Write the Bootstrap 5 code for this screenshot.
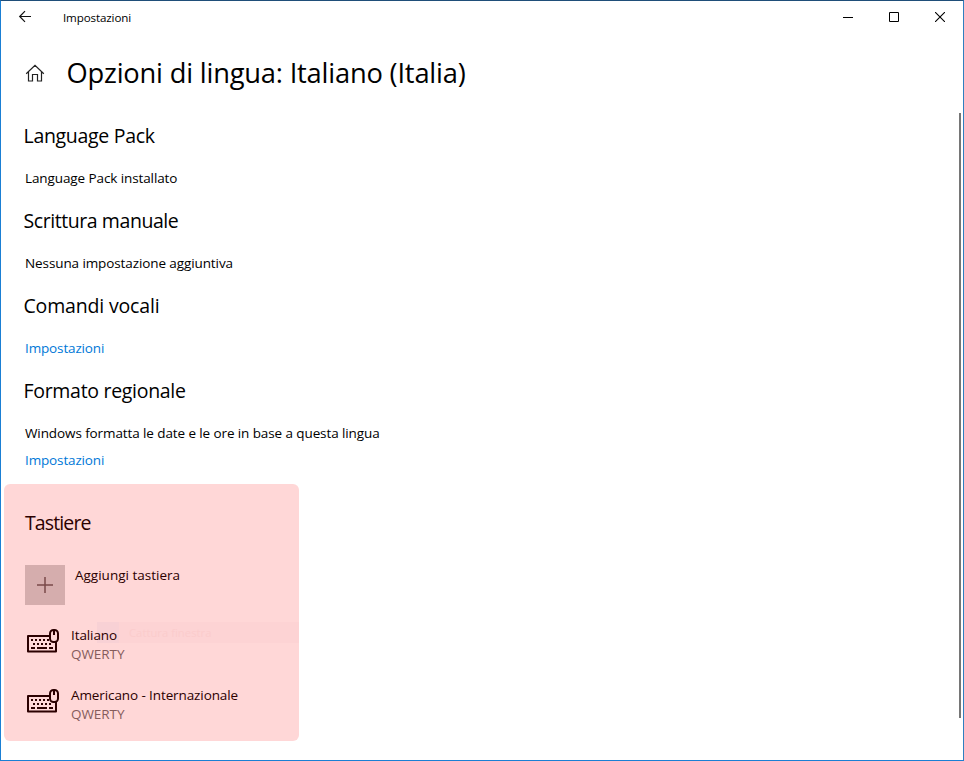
<!DOCTYPE html>
<html lang="it">
<head>
<meta charset="utf-8">
<meta name="viewport" content="width=device-width, initial-scale=1">
<title>Impostazioni</title>
<link rel="stylesheet" href="https://cdn.jsdelivr.net/npm/bootstrap@5.3.0/dist/css/bootstrap.min.css">
<style>
body { font-family: "Open Sans", "Segoe UI", sans-serif; font-size: 13.5px; line-height: 20px; color: #000; background: #fff; }
.window { height: 761px; border: 1px solid #1a7fd4; border-top-color: #1f4e79; border-right-color: #2f7fc0; }
.titlebar { height: 32px; padding-left: 17px; }
.titlebar svg, .page-head svg, .keyboard svg { display: block; flex: none; }
.app-name { font-size: 11.6px; margin-left: 31px; letter-spacing: -.12px; padding-top: 1px; }
.caption-btn { width: 46px; height: 32px; border: 0; background: none; padding: 0; }
.page-head { height: 40px; margin-top: 20px; padding-left: 24px; }
.page-title { font-size: 27.3px; line-height: 40px; font-weight: 400; margin: 0 0 0 21.5px; letter-spacing: -.2px; }
.scroll-area { height: 648px; margin-top: 19px; padding: 0 2px 0 3px; }
.settings { padding: 10px 0 0 20px; }
.section-title { font-size: 19.5px; line-height: 28px; font-weight: 400; margin: 0 0 18px -.5px; letter-spacing: -.3px; }
.title-tight { letter-spacing: -.43px; }
.title-loose { letter-spacing: -.17px; }
.entry { margin: 0 0 19px 1px; letter-spacing: -.1px; }
.entry a { color: #0078d7; text-decoration: none; letter-spacing: -.14px; }
.entry + .entry { margin-top: -12px; margin-bottom: 14px; }
.keyboards { width: 295px; height: 257px; border-radius: 6px; background: #ffd7d7; color: #2b0000; padding: 25px 0 0 21px; }
.keyboards .section-title { margin: 0 0 28px; letter-spacing: -.88px; }
.add-btn { width: 40px; height: 40px; border: 0; padding: 0; background: #d5adad; }
.add-label { margin-left: 10px; }
.keyboard { height: 40px; margin-top: 20px; line-height: 19px; letter-spacing: -.1px; }
.keyboard-text { margin-left: 12px; padding-top: 1px; }
.layout { color: #855c5c; letter-spacing: -.05px; }
.thumb { width: 2px; height: 605px; margin-top: 1px; background: #767676; }
.ghost { left: 93px; top: 138px; width: 202px; height: 21px; background: #fdd3d4; color: #fbcccc; font-size: 11.3px; line-height: 21px; }
.ghost-icon { width: 22px; height: 21px; background: #f8d1d5; margin-right: 10px; }
</style>
</head>
<body>
<div class="window d-flex flex-column">
  <header class="titlebar d-flex align-items-center">
    <svg width="14" height="14" viewBox="0 0 14 14" fill="none" stroke="#111" stroke-width="1.2"><path d="M13 6.500H2M7 1.200 1.700 6.500 7 11.800"/></svg>
    <span class="app-name">Impostazioni</span>
    <div class="d-flex ms-auto">
      <button class="caption-btn" aria-label="Riduci a icona"><svg width="10" height="10" viewBox="0 0 10 10" class="mx-auto"><path d="M0 5.500h10" stroke="#000"/></svg></button>
      <button class="caption-btn" aria-label="Ingrandisci"><svg width="10" height="10" viewBox="0 0 10 10" class="mx-auto"><path d="M.5.5h9v9h-9z" fill="none" stroke="#000"/></svg></button>
      <button class="caption-btn" aria-label="Chiudi"><svg width="10" height="10" viewBox="0 0 10 10" class="mx-auto"><path d="m0 0 10 10M10 0 0 10" stroke="#000" stroke-width="1.1"/></svg></button>
    </div>
  </header>

  <div class="page-head d-flex align-items-center">
    <svg width="20" height="20" viewBox="0 0 20 20" fill="none" stroke="#222" stroke-width="1.200"><path d="M1.200 10.800 10 2.300l8.800 8.500M3.500 8.800v9.200h4v-6.500h5v6.500h4V8.800"/></svg>
    <h1 class="page-title">Opzioni di lingua: Italiano (Italia)</h1>
  </div>

  <div class="scroll-area d-flex justify-content-between">
    <main>
      <div class="settings">
        <h2 class="section-title">Language Pack</h2>
        <p class="entry">Language Pack installato</p>
        <h2 class="section-title title-tight">Scrittura manuale</h2>
        <p class="entry">Nessuna impostazione aggiuntiva</p>
        <h2 class="section-title title-loose">Comandi vocali</h2>
        <p class="entry"><a href="#">Impostazioni</a></p>
        <h2 class="section-title">Formato regionale</h2>
        <p class="entry">Windows formatta le date e le ore in base a questa lingua</p>
        <p class="entry"><a href="#">Impostazioni</a></p>
      </div>
      <section class="keyboards position-relative">
        <div class="ghost position-absolute d-flex" aria-hidden="true"><span class="ghost-icon"></span>Cattura finestra</div>
        <h2 class="section-title">Tastiere</h2>
        <div class="d-flex">
          <button class="add-btn" aria-label="Aggiungi tastiera"><svg width="16" height="16" viewBox="0 0 16 16" class="d-block mx-auto"><path d="M8 0v16M0 8h16" stroke="#7a4a4a" stroke-width="1.500"/></svg></button>
          <span class="add-label">Aggiungi tastiera</span>
        </div>
        <div class="keyboard d-flex position-relative">
          <svg width="34" height="34" viewBox="0 0 34 34"><use href="#kbd"/></svg>
          <div class="keyboard-text"><div>Italiano</div><div class="layout">QWERTY</div></div>
        </div>
        <div class="keyboard d-flex position-relative">
          <svg width="34" height="34" viewBox="0 0 34 34"><use href="#kbd"/></svg>
          <div class="keyboard-text"><div>Americano - Internazionale</div><div class="layout">QWERTY</div></div>
        </div>
      </section>
    </main>
    <div class="thumb"></div>
  </div>
</div>
<svg width="0" height="0" class="position-absolute">
  <symbol id="kbd" viewBox="0 0 34 34">
    <path d="M31 17v9.500H3V11h21" fill="none" stroke="#2b0000" stroke-width="2" stroke-linejoin="round"/>
    <path d="M6 15h18M8 19h20" stroke="#2b0000" stroke-width="2" stroke-dasharray="2 2"/>
    <path d="M6 23h4M12 23h10M24 23h4" stroke="#2b0000" stroke-width="2"/>
    <rect x="25" y="5" width="8" height="12" rx="3.500" fill="#ffd7d7" stroke="#2b0000" stroke-width="2"/>
    <path d="M29 5v5" stroke="#2b0000" stroke-width="2"/>
  </symbol>
</svg>
<script src="https://cdn.jsdelivr.net/npm/bootstrap@5.3.0/dist/js/bootstrap.bundle.min.js"></script>
</body>
</html>
